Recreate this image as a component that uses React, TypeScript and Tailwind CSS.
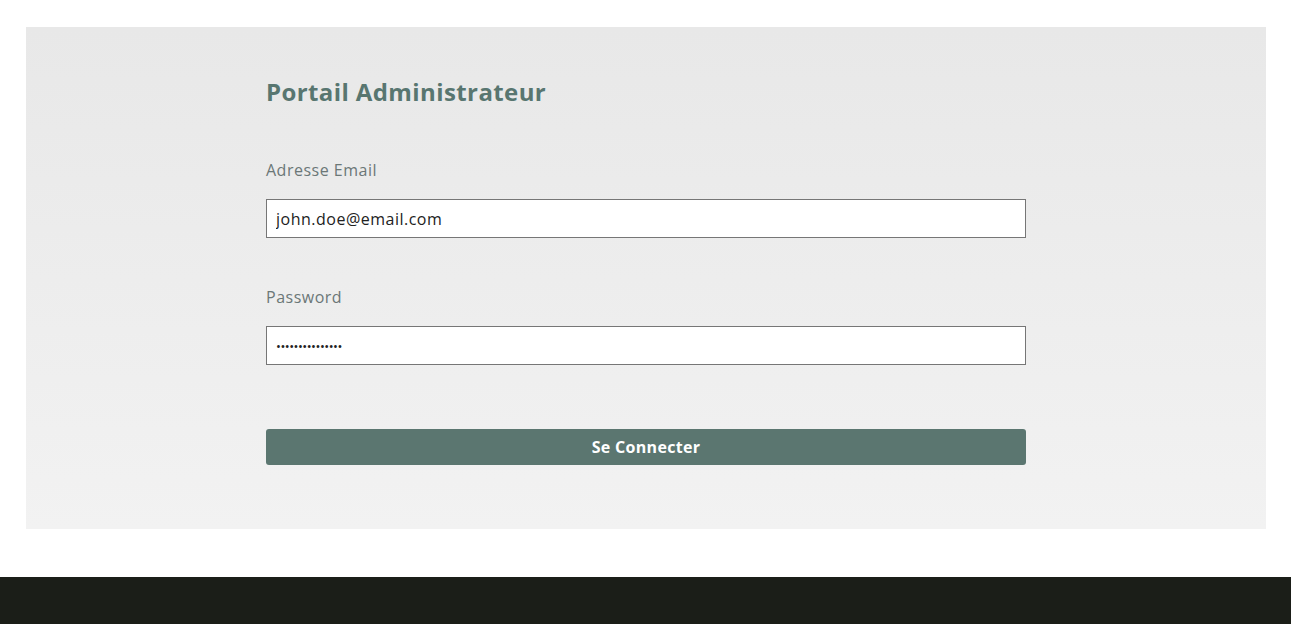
export default function App() {
  return (
    <div className="min-h-screen bg-white font-['Open_Sans',sans-serif]">
      <div className="pl-[26px] pr-[25px] pt-[27px] pb-[48px]">
        <section className="bg-gradient-to-b from-[#e8e8e8] to-[#f2f2f2] pt-[81px] pb-[64px]">
          <form className="mx-auto flex w-[760px] flex-col" onSubmit={(e) => e.preventDefault()}>
            <h1 className="-mt-[34px] text-[24px] leading-[36px] font-bold tracking-[0.4px] text-[#587670]">
              Portail Administrateur
            </h1>

            <label className="mt-[48px] text-[16px] leading-[24px] tracking-[0.5px] text-[#6b7777]">
              Adresse Email
            </label>
            <input
              type="email"
              defaultValue="john.doe@email.com"
              className="mt-[17px] h-[39px] border border-[#767676] bg-white px-[9px] text-[16px] tracking-[0.5px] text-[#222] outline-none"
            />

            <label className="mt-[47px] text-[16px] leading-[24px] tracking-[0.5px] text-[#6b7777]">
              Password
            </label>
            <input
              type="password"
              defaultValue="aaaaaaaaaaaaaaa"
              className="mt-[17px] h-[39px] border border-[#767676] bg-white px-[9px] text-[13px] tracking-[-0.5px] text-[#222] outline-none"
            />

            <button
              type="submit"
              className="mt-[64px] h-[36px] rounded-[3px] bg-[#5b7670] text-[16px] font-bold tracking-[0.3px] text-white"
            >
              Se Connecter
            </button>
          </form>
        </section>
      </div>
      <footer className="h-[200px] bg-[#1b1e18]" />
    </div>
  )
}
